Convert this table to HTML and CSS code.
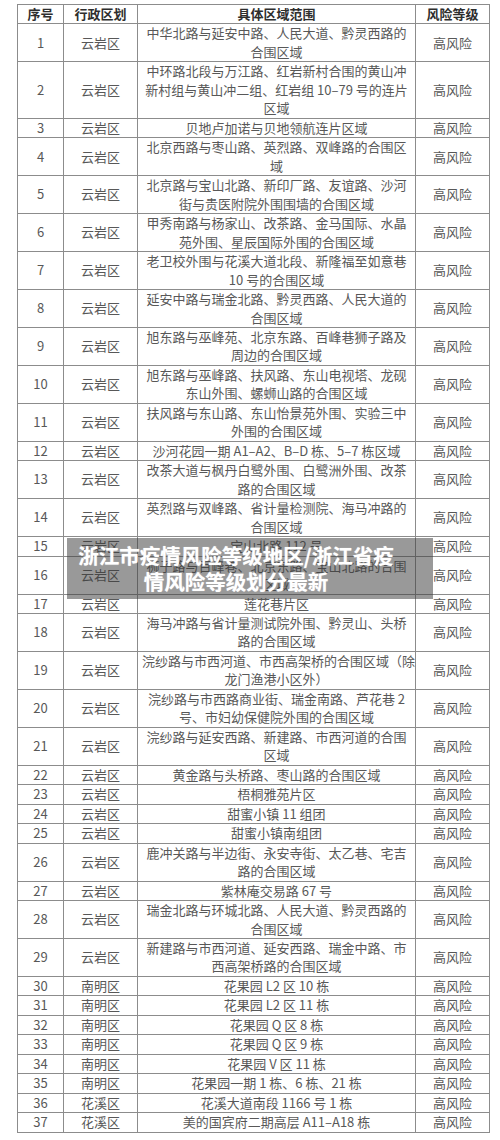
FILE: index.html
```html
<!DOCTYPE html>
<html lang="zh-CN">
<head>
<meta charset="utf-8">
<title>浙江市疫情风险等级地区</title>
<link rel="stylesheet" href="styles.css">
</head>
<body>
<div class="page">
<table class="risk">
<colgroup><col class="c1"><col class="c2"><col class="c3"><col class="c4"></colgroup>
<thead>
<tr><th>序号</th><th>行政区划</th><th>具体区域范围</th><th>风险等级</th></tr>
</thead>
<tbody>
<tr><td>1</td><td>云岩区</td><td>中华北路与延安中路、人民大道、黔灵西路的<br>合围区域</td><td>高风险</td></tr>
<tr><td>2</td><td>云岩区</td><td>中环路北段与万江路、红岩新村合围的黄山冲<br>新村组与黄山冲二组、红岩组 10–79 号的连片<br>区域</td><td>高风险</td></tr>
<tr><td>3</td><td>云岩区</td><td>贝地卢加诺与贝地领航连片区域</td><td>高风险</td></tr>
<tr><td>4</td><td>云岩区</td><td>北京西路与枣山路、英烈路、双峰路的合围区<br>域</td><td>高风险</td></tr>
<tr><td>5</td><td>云岩区</td><td>北京路与宝山北路、新印厂路、友谊路、沙河<br>街与贵医附院外围围墙的合围区域</td><td>高风险</td></tr>
<tr><td>6</td><td>云岩区</td><td>甲秀南路与杨家山、改茶路、金马国际、水晶<br>苑外围、星辰国际外围的合围区域</td><td>高风险</td></tr>
<tr><td>7</td><td>云岩区</td><td>老卫校外围与花溪大道北段、新隆福至如意巷<br>10 号的合围区域</td><td>高风险</td></tr>
<tr><td>8</td><td>云岩区</td><td>延安中路与瑞金北路、黔灵西路、人民大道的<br>合围区域</td><td>高风险</td></tr>
<tr><td>9</td><td>云岩区</td><td>旭东路与巫峰苑、北京东路、百峰巷狮子路及<br>周边的合围区域</td><td>高风险</td></tr>
<tr><td>10</td><td>云岩区</td><td>旭东路与巫峰路、扶风路、东山电视塔、龙砚<br>东山外围、螺蛳山路的合围区域</td><td>高风险</td></tr>
<tr><td>11</td><td>云岩区</td><td>扶风路与东山路、东山怡景苑外围、实验三中<br>外围的合围区域</td><td>高风险</td></tr>
<tr><td>12</td><td>云岩区</td><td>沙河花园一期 A1–A2、B–D 栋、5–7 栋区域</td><td>高风险</td></tr>
<tr><td>13</td><td>云岩区</td><td>改茶大道与枫丹白鹭外围、白鹭洲外围、改茶<br>路的合围区域</td><td>高风险</td></tr>
<tr><td>14</td><td>云岩区</td><td>英烈路与双峰路、省计量检测院、海马冲路的<br>合围区域</td><td>高风险</td></tr>
<tr><td>15</td><td>云岩区</td><td>宝山北路 112 号</td><td>高风险</td></tr>
<tr><td>16</td><td>云岩区</td><td>狮子路与百峰巷、北京东路、宝山北路的合围<br>区域</td><td>高风险</td></tr>
<tr><td>17</td><td>云岩区</td><td>莲花巷片区</td><td>高风险</td></tr>
<tr><td>18</td><td>云岩区</td><td>海马冲路与省计量测试院外围、黔灵山、头桥<br>路的合围区域</td><td>高风险</td></tr>
<tr><td>19</td><td>云岩区</td><td>浣纱路与市西河道、市西高架桥的合围区域（除<br>龙门渔港小区外）</td><td>高风险</td></tr>
<tr><td>20</td><td>云岩区</td><td>浣纱路与市西路商业街、瑞金南路、芦花巷 2<br>号、市妇幼保健院外围的合围区域</td><td>高风险</td></tr>
<tr><td>21</td><td>云岩区</td><td>浣纱路与延安西路、新建路、市西河道的合围<br>区域</td><td>高风险</td></tr>
<tr><td>22</td><td>云岩区</td><td>黄金路与头桥路、枣山路的合围区域</td><td>高风险</td></tr>
<tr><td>23</td><td>云岩区</td><td>梧桐雅苑片区</td><td>高风险</td></tr>
<tr><td>24</td><td>云岩区</td><td>甜蜜小镇 11 组团</td><td>高风险</td></tr>
<tr><td>25</td><td>云岩区</td><td>甜蜜小镇南组团</td><td>高风险</td></tr>
<tr><td>26</td><td>云岩区</td><td>鹿冲关路与半边街、永安寺街、太乙巷、宅吉<br>路的合围区域</td><td>高风险</td></tr>
<tr><td>27</td><td>云岩区</td><td>紫林庵交易路 67 号</td><td>高风险</td></tr>
<tr><td>28</td><td>云岩区</td><td>瑞金北路与环城北路、人民大道、黔灵西路的<br>合围区域</td><td>高风险</td></tr>
<tr><td>29</td><td>云岩区</td><td>新建路与市西河道、延安西路、瑞金中路、市<br>西高架桥路的合围区域</td><td>高风险</td></tr>
<tr><td>30</td><td>南明区</td><td>花果园 L2 区 10 栋</td><td>高风险</td></tr>
<tr><td>31</td><td>南明区</td><td>花果园 L2 区 11 栋</td><td>高风险</td></tr>
<tr><td>32</td><td>南明区</td><td>花果园 Q 区 8 栋</td><td>高风险</td></tr>
<tr><td>33</td><td>南明区</td><td>花果园 Q 区 9 栋</td><td>高风险</td></tr>
<tr><td>34</td><td>南明区</td><td>花果园 V 区 11 栋</td><td>高风险</td></tr>
<tr><td>35</td><td>南明区</td><td>花果园一期 1 栋、6 栋、21 栋</td><td>高风险</td></tr>
<tr><td>36</td><td>花溪区</td><td>花溪大道南段 1166 号 1 栋</td><td>高风险</td></tr>
<tr><td>37</td><td>花溪区</td><td>美的国宾府二期高层 A11–A18 栋</td><td>高风险</td></tr>
</tbody>
</table>
<div class="title-overlay">
<p class="title-text">浙江市疫情风险等级地区/浙江省疫<br>情风险等级划分最新</p>
</div>
</div>
</body>
</html>
```

FILE: styles.css
```css
html, body {
  margin: 0;
  padding: 0;
  background: #ffffff;
}

.page {
  position: relative;
  width: 500px;
  min-height: 1140px;
  padding-top: 4px;
  box-sizing: border-box;
  font-family: "Noto Sans CJK SC", "Noto Sans", "Liberation Sans", sans-serif;
}

.risk {
  margin-left: 17px;
  width: 472px;
  border-collapse: collapse;
  table-layout: fixed;
  color: #585858;
  font-size: 13px;
}

.c1 { width: 46px; }
.c2 { width: 74px; }
.c3 { width: 278px; }
.c4 { width: 74px; }

.risk th,
.risk td {
  border: 1px solid #8c8c8c;
  padding: 0 4px;
  line-height: 18.47px;
  text-align: center;
  vertical-align: middle;
  white-space: nowrap;
}

.risk th {
  font-weight: 700;
  color: #2e2e2e;
  font-size: 13px;
}

.title-overlay {
  position: absolute;
  left: 67px;
  top: 538px;
  width: 366px;
  height: 61px;
  background: rgba(60, 60, 60, 0.52);
  box-sizing: border-box;
  padding: 4px 28px 0 0;
}

.title-text {
  margin: 0;
  color: #ffffff;
  font-size: 20.5px;
  line-height: 26px;
  font-weight: 700;
  text-align: center;
  white-space: nowrap;
  text-shadow: 0 0 1px rgba(255, 255, 255, 0.6);
}
```
